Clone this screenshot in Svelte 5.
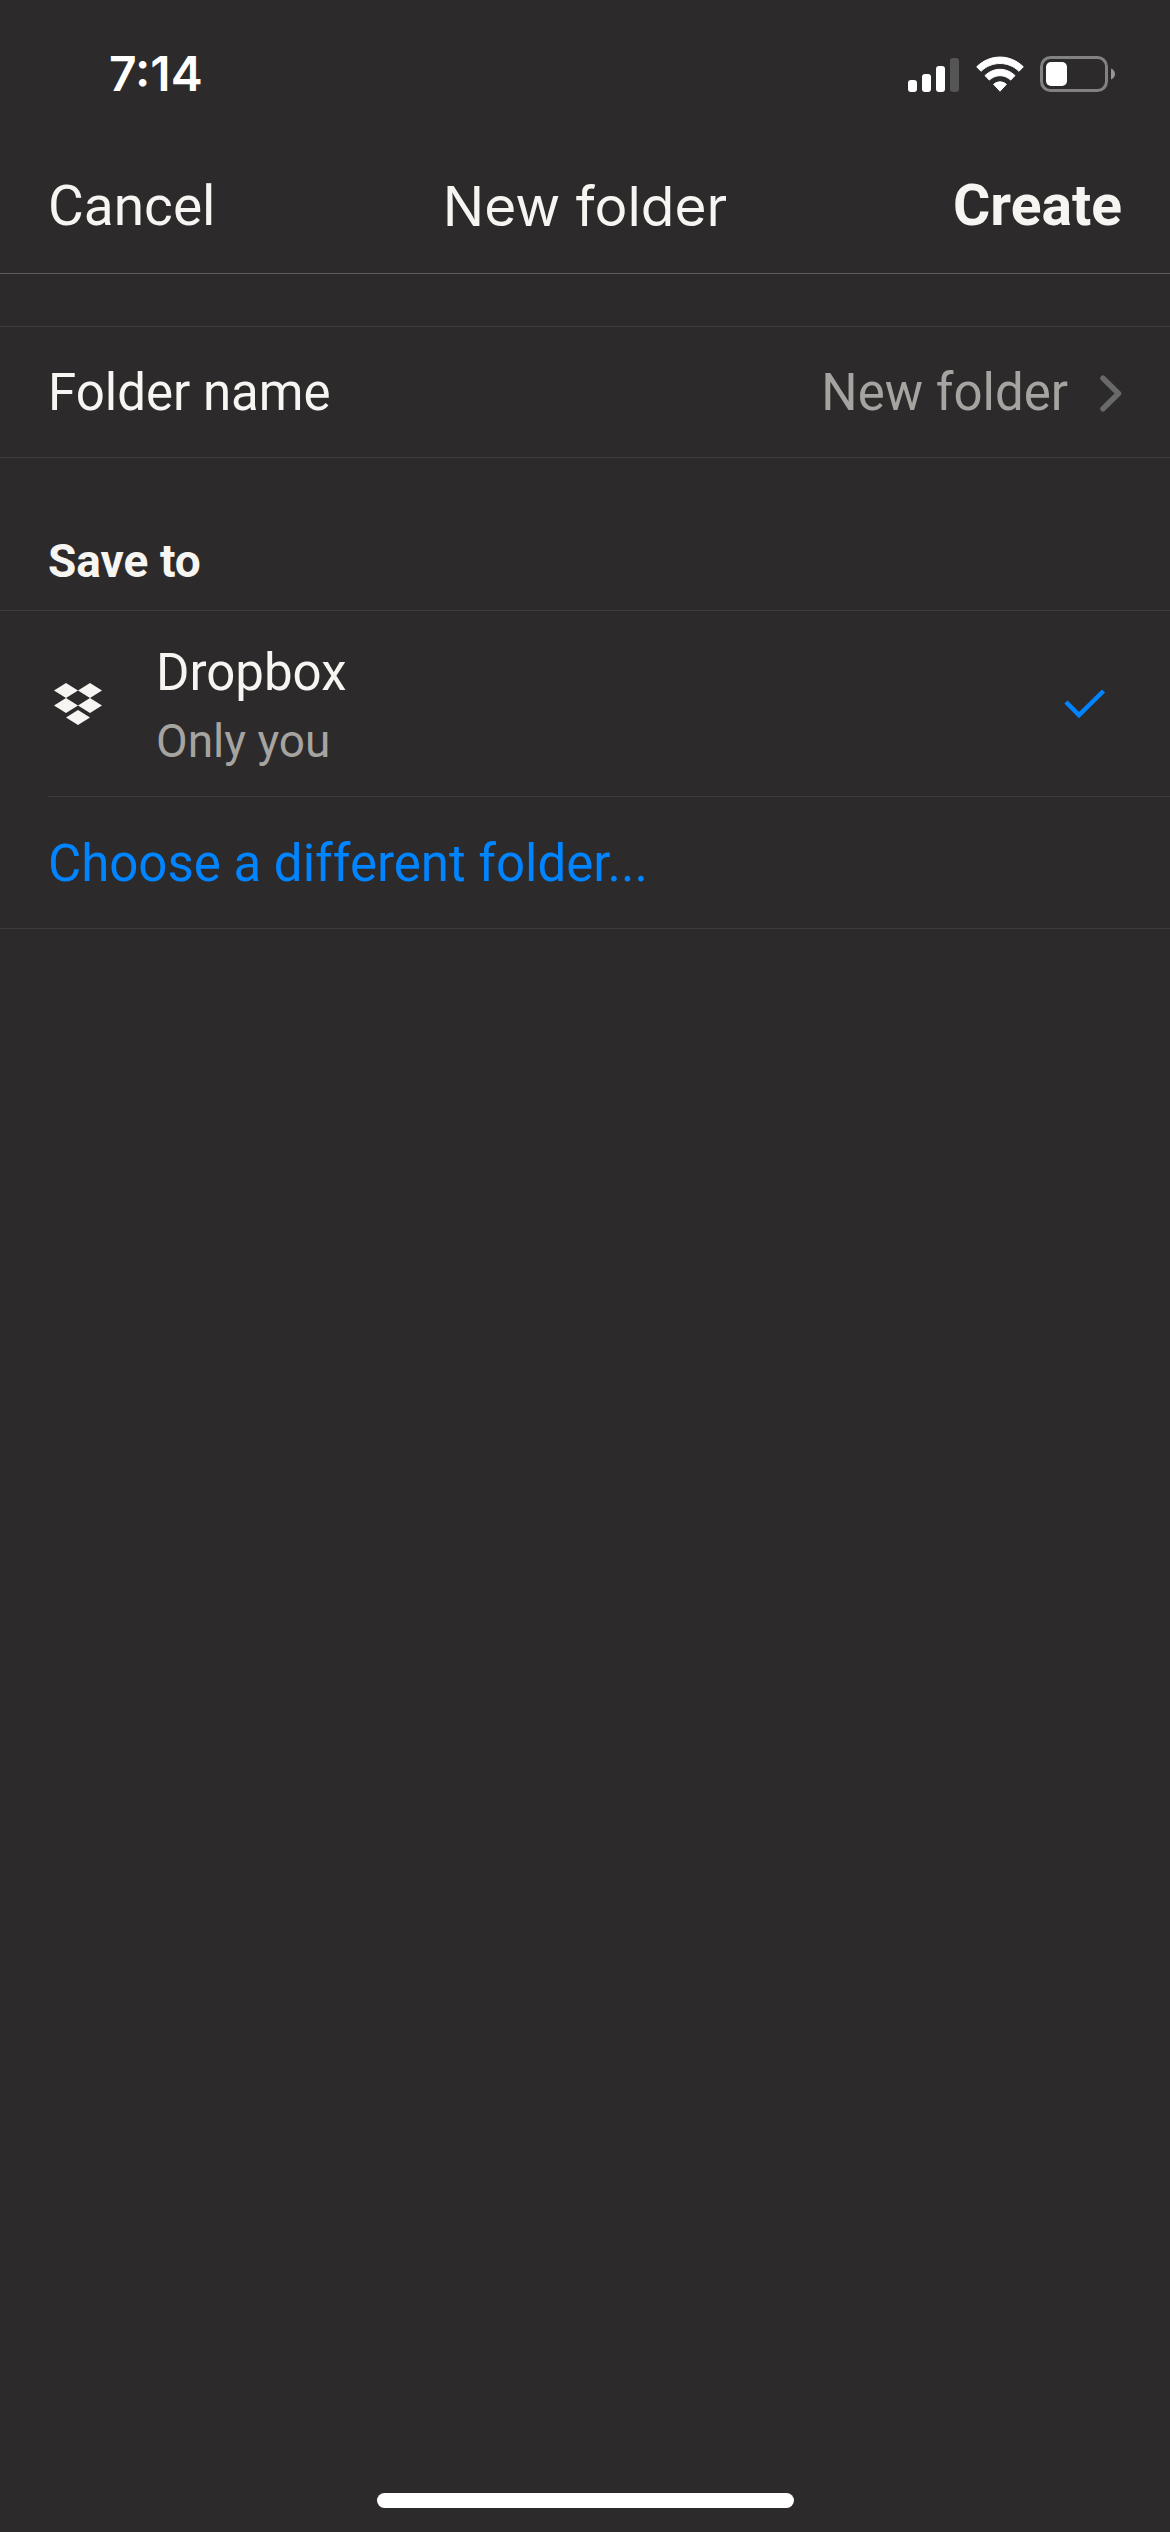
<script>
  const title = 'New folder';
  let folderName = $state('New folder');
  let location = $state({ name: 'Dropbox', access: 'Only you' });
</script>

<div class="screen">
  <div class="status">
    <time>7:14</time>
    <div class="indicators">
      <svg width="52" height="36" viewBox="0 0 52 36" aria-label="Signal" role="img">
        <rect x="0" y="24" width="9" height="12" rx="3" fill="#fff" />
        <rect x="14" y="18" width="9" height="18" rx="3" fill="#fff" />
        <rect x="28" y="10" width="9" height="26" rx="3" fill="#fff" />
        <rect x="42" y="2" width="9" height="34" rx="3" fill="#565555" />
      </svg>
      <svg width="48" height="36" viewBox="0 0 48 36" aria-label="Wi-Fi" role="img">
        <g fill="#fff" stroke="#fff" stroke-width="1" stroke-linejoin="round">
          <path d="M.7 10.8C14-2.2 34-2.2 47.3 10.8L43 15.3C32.500 4.900 15.500 4.900 5 15.300Z" />
          <path d="M9 19.600C17.600 11.200 30.400 11.200 39 19.600L34.700 24.100C28.600 18.200 19.400 18.200 13.300 24.100Z" />
          <path d="M17.600 28.300C21.400 25 26.600 25 30.400 28.300L24 35.200Z" />
        </g>
      </svg>
      <svg width="76" height="36" viewBox="0 0 76 36" aria-label="Battery" role="img">
        <rect x="1.500" y="1.500" width="65" height="33" rx="9" fill="none" stroke="#838283" stroke-width="3" />
        <rect x="6" y="6" width="21" height="24" rx="5" fill="#fff" />
        <path d="M71 12.500C76.300 14.600 76.300 21.400 71 23.500Z" fill="#979697" />
      </svg>
    </div>
  </div>

  <header>
    <button class="action">Cancel</button>
    <h1>{title}</h1>
    <button class="action primary">Create</button>
  </header>

  <main>
    <button class="row name">
      <span>Folder name</span>
      <span class="value">{folderName}</span>
      <svg width="22" height="37" viewBox="0 0 22 37" aria-hidden="true">
        <path d="M3 3.200L18.500 18.500L3 33.800" fill="none" stroke="#69696b" stroke-width="5.500" stroke-linecap="round" stroke-linejoin="round" />
      </svg>
    </button>

    <h2>Save to</h2>

    <button class="row place" aria-pressed="true">
      <svg width="48" height="42" viewBox="0 0 48 42" aria-hidden="true">
        <path fill="#f7f5f2" d="M12 0L24 7.500L12 15L0 7.500ZM36 0L48 7.500L36 15L24 7.500ZM12 15L24 22.500L12 30L0 22.500ZM36 15L48 22.500L36 30L24 22.500ZM24 27L36 34.500L24 42L12 34.500Z" />
      </svg>
      <span class="details">
        <span>{location.name}</span>
        <span class="access">{location.access}</span>
      </span>
      <svg width="42" height="30" viewBox="0 0 42 30" aria-hidden="true">
        <path d="M2 13L15 26L39.500 2" fill="none" stroke="#0084ff" stroke-width="4.500" />
      </svg>
    </button>
    <hr />
    <button class="row choose">Choose a different folder...</button>
  </main>

  <div class="home"></div>
</div>

<style>
  :global(body) {
    background: #2c2a2b;
  }
  .screen {
    min-height: 100vh;
    box-sizing: border-box;
    display: flex;
    flex-direction: column;
    padding-bottom: 24px;
    background: #2c2a2b;
    color: #f7f5f2;
    font-family: Roboto, "Liberation Sans", sans-serif;
    font-size: 51px;
    line-height: 68px;
  }
  .status {
    display: flex;
    justify-content: space-between;
    align-items: center;
    padding: 40px 54px 30px 109px;
    color: #fff;
  }
  time {
    font-family: Inter, sans-serif;
    font-size: 48px;
    font-weight: 600;
  }
  .indicators {
    display: flex;
    gap: 16px;
  }
  svg {
    display: block;
    flex: none;
  }
  button {
    margin: 0;
    padding: 0;
    border: 0;
    background: none;
    color: inherit;
    font: inherit;
    text-align: left;
    cursor: pointer;
  }
  header {
    display: grid;
    grid-template-columns: 1fr auto 1fr;
    align-items: center;
    padding: 34px 48px 33px;
    border-bottom: 1px solid #5d5b5c;
  }
  .action {
    font-size: 55px;
    justify-self: start;
  }
  .primary {
    font-size: 57px;
    font-weight: 700;
    justify-self: end;
  }
  h1 {
    margin: 0;
    font-family: Inter, sans-serif;
    font-size: 55px;
    font-weight: 400;
  }
  main {
    flex: 1;
    padding-top: 52px;
  }
  .row {
    display: flex;
    align-items: center;
    width: 100%;
    padding: 32px 48px 30px;
  }
  .name {
    border-top: 1px solid #3e3c3d;
    border-bottom: 1px solid #3e3c3d;
  }
  .value {
    margin-left: auto;
    margin-right: 32px;
    color: #a6a4a1;
  }
  h2 {
    margin: 0;
    padding: 69px 48px 15px;
    border-bottom: 1px solid #3e3c3d;
    font-size: 46px;
    font-weight: 700;
  }
  .place {
    padding: 22px 64px 21px 54px;
  }
  .details {
    display: flex;
    flex-direction: column;
    flex: 1;
    padding: 6px 0 0 54px;
  }
  .access {
    color: #a6a4a1;
    font-size: 46px;
  }
  hr {
    margin: 0 0 0 48px;
    border: 0;
    border-top: 1px solid #3e3c3d;
  }
  .choose {
    padding: 33px 48px 30px;
    border-bottom: 1px solid #3e3c3d;
    color: #0084ff;
  }
  .home {
    align-self: center;
    width: 417px;
    height: 15px;
    border-radius: 8px;
    background: #fff;
  }
</style>
